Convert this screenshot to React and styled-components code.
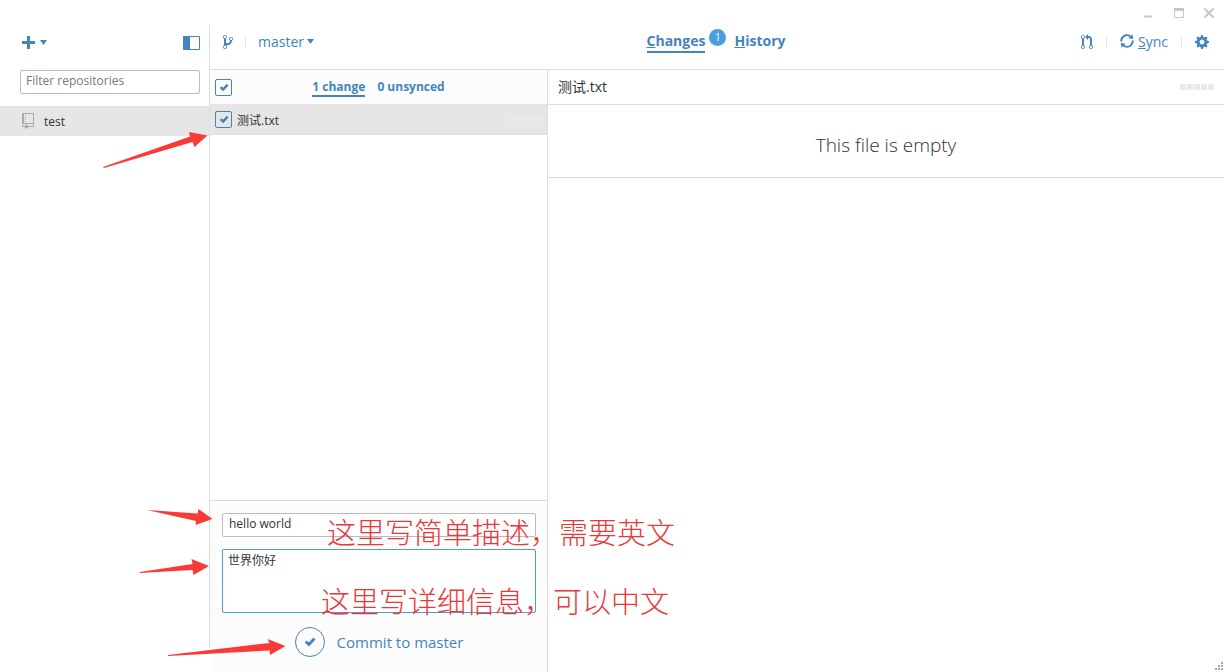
import React, { useState } from 'react';
import styled, { createGlobalStyle } from 'styled-components';

const blue = '#4384bf';
const line = '#dddddd';
const red = '#f93a37';

const GlobalStyle = createGlobalStyle`
  * {
    box-sizing: border-box;
  }
  body {
    margin: 0;
    background: #fff;
    color: #333;
    font-family: 'Open Sans', 'Noto Sans CJK SC', sans-serif;
    font-size: 12px;
  }
  button, input, textarea {
    font-family: inherit;
    color: inherit;
  }
`;

// octicons
const ICONS = {
  branch: {
    w: 10,
    d: 'M10 5c0-1.11-.89-2-2-2a1.993 1.993 0 0 0-1 3.72v.3c-.02.52-.23.98-.63 1.38-.4.4-.86.61-1.38.63-.83.02-1.48.16-2 .45V4.72a1.993 1.993 0 0 0-1-3.72C.88 1 0 1.89 0 3a2 2 0 0 0 1 1.72v6.56c-.59.35-1 .99-1 1.72 0 1.11.89 2 2 2 1.11 0 2-.89 2-2 0-.53-.2-1-.53-1.36.09-.06.48-.41.59-.47.25-.11.56-.17.94-.17 1.05-.05 1.95-.45 2.75-1.25S8.95 7.77 9 6.73h-.02C9.59 6.37 10 5.73 10 5zM2 1.8c.66 0 1.2.55 1.2 1.2 0 .65-.55 1.2-1.2 1.2C1.35 4.2.8 3.65.8 3c0-.65.55-1.2 1.2-1.2zm0 12.41c-.66 0-1.2-.55-1.2-1.2 0-.65.55-1.2 1.2-1.2.65 0 1.2.55 1.2 1.2 0 .65-.55 1.2-1.2 1.2zm6-8c-.66 0-1.2-.55-1.2-1.2 0-.65.55-1.2 1.2-1.2.65 0 1.2.55 1.2 1.2 0 .65-.55 1.2-1.2 1.2z',
  },
  pullRequest: {
    w: 12,
    d: 'M11 11.28V5c-.03-.78-.34-1.47-.94-2.06C9.46 2.35 8.78 2.03 8 2H7V0L4 3l3 3V4h1c.27.02.48.11.69.31.21.2.3.42.31.69v6.28A1.993 1.993 0 0 0 10 15a1.993 1.993 0 0 0 1-3.72zm-1 2.92c-.66 0-1.2-.55-1.2-1.2 0-.65.55-1.2 1.2-1.2.65 0 1.2.55 1.2 1.2 0 .65-.55 1.2-1.2 1.2zM4 3c0-1.11-.89-2-2-2a1.993 1.993 0 0 0-1 3.72v6.56A1.993 1.993 0 0 0 2 15a1.993 1.993 0 0 0 1-3.72V4.72c.59-.34 1-.98 1-1.72zm-.8 10c0 .66-.55 1.2-1.2 1.2-.65 0-1.2-.55-1.2-1.2 0-.65.55-1.2 1.2-1.2.65 0 1.2.55 1.2 1.2zM2 4.2C1.34 4.2.8 3.65.8 3c0-.65.55-1.2 1.2-1.2.65 0 1.2.55 1.2 1.2 0 .65-.55 1.2-1.2 1.2z',
  },
  sync: {
    w: 12,
    d: 'M10.24 7.4a4.15 4.15 0 0 1-1.2 3.6 4.346 4.346 0 0 1-5.41.54L4.8 10.4.5 9.8l.6 4.2 1.31-1.26c2.36 1.74 5.7 1.57 7.84-.54a5.876 5.876 0 0 0 1.74-4.46l-1.75-.34zM2.96 5a4.346 4.346 0 0 1 5.41-.54L7.2 5.6l4.3.6-.6-4.2-1.31 1.26c-2.36-1.74-5.7-1.57-7.85.54C.5 5.03-.06 6.65.01 8.26l1.75.35A4.17 4.17 0 0 1 2.96 5z',
  },
  gear: {
    w: 14,
    d: 'M14 8.77v-1.6l-1.94-.64-.45-1.09.88-1.84-1.13-1.13-1.81.91-1.09-.45-.69-1.92h-1.6l-.63 1.94-1.11.45-1.84-.88-1.13 1.13.91 1.81-.45 1.09L0 7.23v1.59l1.94.64.45 1.09-.88 1.84 1.13 1.13 1.81-.91 1.09.45.69 1.92h1.59l.63-1.94 1.11-.45 1.84.88 1.13-1.13-.92-1.81.47-1.09L14 8.75v.02zM7 10.400c-1.330 0-2.400-1.070-2.400-2.400s1.070-2.400 2.400-2.400 2.400 1.070 2.400 2.400-1.070 2.400-2.400 2.400z',
  },
  repo: {
    w: 12,
    d: 'M4 9H3V8h1v1zm0-3H3v1h1V6zm0-2H3v1h1V4zm0-2H3v1h1V2zm8-1v12c0 .55-.45 1-1 1H6v2l-1.5-1.5L3 16v-2H1c-.55 0-1-.45-1-1V1c0-.55.45-1 1-1h10c.55 0 1 .45 1 1zm-1 10H1v2h2v-1h3v1h5v-2zm0-10H2v9h9V1z',
  },
  check: { w: 12, d: 'M11.500 5.500L5 12.500 .7 8.500 2.700 6.500 4.800 8.400 9.500 3.500z' },
};

function Octicon({ name, height = 16 }) {
  const { w, d } = ICONS[name];
  return (
    <svg
      width={Math.round((w * height) / 16)}
      height={height}
      viewBox={`0 0 ${w} 16`}
      fill="currentColor"
      aria-hidden="true"
    >
      <path d={d} />
    </svg>
  );
}

function Caret() {
  return (
    <svg width="7" height="5" viewBox="0 0 7 5" fill="currentColor" aria-hidden="true">
      <path d="M0 0h7L3.5 5z" />
    </svg>
  );
}

function CheckBox({ label, ...rest }) {
  return (
    <CheckLabel>
      <CheckInput type="checkbox" aria-label={label} {...rest} />
      <Octicon name="check" height={13} />
    </CheckLabel>
  );
}

function App() {
  const [filter, setFilter] = useState('');
  const [checked, setChecked] = useState(true);
  const [summary, setSummary] = useState('hello world');
  const [description, setDescription] = useState('世界你好');

  return (
    <>
      <GlobalStyle />
      <Window>
        <TitleBar>
          <WindowButton aria-label="Minimize">
            <svg width="10" height="10" viewBox="0 0 10 10">
              <path d="M0 8.500h8" stroke="currentColor" strokeWidth="2" />
            </svg>
          </WindowButton>
          <WindowButton aria-label="Maximize">
            <svg width="10" height="10" viewBox="0 0 10 10">
              <path d="M.5 .5h9v9h-9z" fill="none" stroke="currentColor" />
              <path d="M0 0h10v3H0z" fill="currentColor" />
            </svg>
          </WindowButton>
          <WindowButton aria-label="Close">
            <svg width="10" height="10" viewBox="0 0 10 10">
              <path d="M.5 .5l9 9M9.500 .5L.5 9.500" stroke="currentColor" strokeWidth="2" />
            </svg>
          </WindowButton>
        </TitleBar>

        <Columns>
          <Sidebar>
            <SidebarTop>
              <IconButton aria-label="Add repository">
                <svg width="13" height="13" viewBox="0 0 13 13" aria-hidden="true">
                  <path d="M6.500 0v13M0 6.500h13" stroke="currentColor" strokeWidth="3" />
                </svg>
                <Caret />
              </IconButton>
              <IconButton aria-label="Toggle sidebar">
                <svg width="17" height="14" viewBox="0 0 17 14" aria-hidden="true">
                  <path d="M.5 .5h16v13h-16z" fill="none" stroke="currentColor" />
                  <path d="M0 0h7v14H0z" fill="currentColor" />
                </svg>
              </IconButton>
            </SidebarTop>
            <FilterInput
              type="text"
              aria-label="Filter repositories"
              placeholder="Filter repositories"
              value={filter}
              onChange={(e) => setFilter(e.target.value)}
            />
            <RepoRow href="#test">
              <Octicon name="repo" />
              test
            </RepoRow>
            <SidebarArrow width="110" height="40" viewBox="100 130 110 40" aria-hidden="true">
              <path d="M103 167L190 136.500 189 132 207.500 135.500 194.500 147 192.500 142 104 168z" />
            </SidebarArrow>
          </Sidebar>

          <Content>
            <Header>
              <HeaderGroup>
                <Octicon name="branch" />
                <Divider />
                <TextButton $gap={3}>
                  master
                  <Caret />
                </TextButton>
              </HeaderGroup>
              <Tabs>
                <Tab href="#changes" $active>
                  <u>C</u>hanges
                </Tab>
                <Badge>1</Badge>
                <Tab href="#history">
                  <u>H</u>istory
                </Tab>
              </Tabs>
              <HeaderGroup $end>
                <IconButton aria-label="Pull request">
                  <Octicon name="pullRequest" />
                </IconButton>
                <Divider />
                <TextButton $gap={4}>
                  <Octicon name="sync" height={18} />
                  <span>
                    <u>S</u>ync
                  </span>
                </TextButton>
                <Divider />
                <IconButton aria-label="Settings">
                  <Octicon name="gear" />
                </IconButton>
              </HeaderGroup>
            </Header>

            <Panels>
              <ChangesPanel>
                <ChangesBar>
                  <CheckBox
                    label="Select all changes"
                    checked={checked}
                    onChange={(e) => setChecked(e.target.checked)}
                  />
                  <SubTabs>
                    <SubTab href="#change" $active>
                      1 change
                    </SubTab>
                    <SubTab href="#unsynced">0 unsynced</SubTab>
                  </SubTabs>
                </ChangesBar>
                <FileRow>
                  <CheckBox
                    label="测试.txt"
                    checked={checked}
                    onChange={(e) => setChecked(e.target.checked)}
                  />
                  <FileName>测试.txt</FileName>
                  <DiffDots $color="#e9e9e9">
                    <i /><i /><i /><i /><i />
                  </DiffDots>
                </FileRow>
                <CommitForm onSubmit={(e) => e.preventDefault()}>
                  <SummaryInput
                    type="text"
                    aria-label="Summary"
                    value={summary}
                    onChange={(e) => setSummary(e.target.value)}
                  />
                  <DescriptionInput
                    aria-label="Description"
                    value={description}
                    onChange={(e) => setDescription(e.target.value)}
                  />
                  <CommitButton type="submit">
                    <CommitCircle>
                      <Octicon name="check" />
                    </CommitCircle>
                    Commit to master
                  </CommitButton>
                  <Note $top={9} $left={117}>
                    这里写简单描述，需要英文
                  </Note>
                  <Note $top={78} $left={111}>
                    这里写详细信息，可以中文
                  </Note>
                  <FormArrows width="160" height="160" viewBox="140 501 160 160" aria-hidden="true">
                    <path d="M147 510L197.500 513.500 198.500 509 212.500 519 195.500 525 196 521z" />
                    <path d="M140 572L192.500 564 191.500 559 209 566 193.500 575 192.500 570 140 573z" />
                    <path d="M168 655L269.500 643 267.500 639 285.500 646 270 655 269.500 650.500 168 656z" />
                  </FormArrows>
                </CommitForm>
              </ChangesPanel>

              <DiffPanel>
                <DiffHeader>
                  测试.txt
                  <DiffDots $color="#e9e9e9">
                    <i /><i /><i /><i /><i />
                  </DiffDots>
                </DiffHeader>
                <EmptyMessage>This file is empty</EmptyMessage>
              </DiffPanel>
            </Panels>
          </Content>
        </Columns>

        <ResizeGrip width="10" height="10" viewBox="0 0 10 10" aria-hidden="true">
          <path d="M7 0h2v2H7zM4 3h2v2H4zM7 3h2v2H7zM1 6h2v2H1zM4 6h2v2H4zM7 6h2v2H7z" />
        </ResizeGrip>
      </Window>
    </>
  );
}

export default App;

const Window = styled.div`
  position: relative;
  display: flex;
  flex-direction: column;
  min-height: 100vh;
  overflow: hidden;
`;

const TitleBar = styled.div`
  display: flex;
  justify-content: flex-end;
  gap: 20px;
  height: 25px;
  padding: 8px 10px 0 0;
`;

const PlainButton = styled.button`
  display: flex;
  align-items: center;
  padding: 0;
  border: 0;
  background: none;
  cursor: pointer;
`;

const WindowButton = styled(PlainButton)`
  height: 10px;
  color: #c6c6c6;
`;

const Columns = styled.div`
  flex: 1;
  display: flex;
`;

const Sidebar = styled.aside`
  position: relative;
  display: flex;
  flex-direction: column;
  width: 210px;
  flex-shrink: 0;
  margin-bottom: 24px;
  border-right: 1px solid ${line};
`;

const SidebarTop = styled.div`
  display: flex;
  align-items: center;
  justify-content: space-between;
  height: 35px;
  padding: 0 9px 0 22px;
`;

const IconButton = styled(PlainButton)`
  gap: 5px;
  color: ${blue};
`;

const TextBox = styled.input`
  height: 24px;
  padding: 0 6px 3px;
  border: 1px solid #bbb;
  border-radius: 2px;
  background: #fff;
  font-size: 12px;
  outline: none;
`;

const FilterInput = styled(TextBox)`
  margin: 10px 9px 12px 20px;
  padding-left: 5px;

  &::placeholder {
    color: #777;
    opacity: 1;
  }
`;

const RepoRow = styled.a`
  display: flex;
  align-items: center;
  gap: 10px;
  height: 30px;
  padding-left: 22px;
  background: #e6e6e6;
  color: #333;
  font-size: 12px;
  text-decoration: none;

  svg {
    color: #aaa;
  }
`;

const SidebarArrow = styled.svg`
  position: absolute;
  top: 105px;
  left: 100px;
  fill: ${red};
`;

const Content = styled.main`
  flex: 1;
  display: flex;
  flex-direction: column;
  min-width: 0;
`;

const Header = styled.header`
  display: grid;
  grid-template-columns: 1fr auto 1fr;
  height: 45px;
  padding: 0 15px 0 13px;
  border-bottom: 1px solid ${line};
`;

const HeaderGroup = styled.div`
  display: flex;
  align-items: center;
  justify-content: ${(p) => (p.$end ? 'flex-end' : 'flex-start')};
  gap: ${(p) => (p.$end ? '13px' : '12px')};
  height: 34px;
  color: ${blue};
`;

const Divider = styled.span`
  width: 1px;
  height: 12px;
  background: #e4e4e4;
`;

const TextButton = styled(PlainButton)`
  gap: ${(p) => p.$gap}px;
  padding-bottom: 2px;
  color: ${blue};
  font-size: 14px;
`;

const Tabs = styled.nav`
  display: flex;
  align-items: flex-start;
  padding-top: 6px;
`;

const Tab = styled.a`
  height: 22px;
  border-bottom: 2px solid ${(p) => (p.$active ? blue : 'transparent')};
  color: ${blue};
  font-size: 14px;
  font-weight: 700;
  line-height: 20px;
  text-decoration: none;
`;

const Badge = styled.span`
  width: 17px;
  height: 17px;
  margin: -2px 8px 0 4px;
  border-radius: 50%;
  background: #4a9ee2;
  color: #fff;
  font-size: 10px;
  line-height: 17px;
  text-align: center;
`;

const Panels = styled.div`
  flex: 1;
  display: flex;
`;

const ChangesPanel = styled.section`
  display: flex;
  flex-direction: column;
  width: 338px;
  flex-shrink: 0;
  border-right: 1px solid ${line};
`;

const ChangesBar = styled.div`
  display: grid;
  grid-template-columns: 17px 1fr 17px;
  align-items: center;
  height: 34px;
  padding: 0 5px;
  background: #fcfcfc;
`;

const SubTabs = styled.nav`
  display: flex;
  justify-content: center;
  gap: 12px;
`;

const SubTab = styled.a`
  height: 20px;
  border-bottom: 2px solid ${(p) => (p.$active ? blue : 'transparent')};
  color: ${blue};
  font-size: 12px;
  font-weight: 700;
  line-height: 20px;
  text-decoration: none;
`;

const CheckLabel = styled.label`
  display: grid;
  place-items: center;
  width: 17px;
  height: 17px;
  color: ${blue};

  > * {
    grid-area: 1 / 1;
  }
  svg {
    pointer-events: none;
  }
  input:not(:checked) + svg {
    visibility: hidden;
  }
`;

const CheckInput = styled.input`
  appearance: none;
  width: 17px;
  height: 17px;
  margin: 0;
  border: 1px solid ${blue};
  border-radius: 2px;
`;

const FileRow = styled.div`
  display: flex;
  align-items: center;
  gap: 5px;
  height: 31px;
  padding: 0 4px 0 5px;
  border-bottom: 1px solid ${line};
  background: #e6e6e6;
`;

const FileName = styled.span`
  flex: 1;
  padding-top: 2px;
  font-size: 12px;
`;

const DiffDots = styled.span`
  display: flex;
  gap: 1px;

  i {
    width: 6px;
    height: 6px;
    background: ${(p) => p.$color};
  }
`;

const CommitForm = styled.form`
  position: relative;
  display: flex;
  flex-direction: column;
  gap: 12px;
  margin-top: auto;
  height: 172px;
  padding: 12px 11px 0 12px;
  border-top: 1px solid ${line};
  background: #fcfcfc;
`;

const SummaryInput = styled(TextBox)``;

const DescriptionInput = styled.textarea`
  height: 64px;
  padding: 2px 5px;
  border: 1px solid #4a9ed0;
  border-radius: 2px;
  background: #fff;
  font-size: 12px;
  line-height: 18px;
  resize: none;
  outline: none;
`;

const CommitButton = styled(PlainButton)`
  align-self: center;
  gap: 12px;
  padding-top: 2px;
  color: ${blue};
  font-size: 15px;
  line-height: 18px;
`;

const CommitCircle = styled.span`
  display: grid;
  place-items: center;
  width: 30px;
  height: 30px;
  border: 1px solid ${blue};
  border-radius: 50%;
`;

// hand-written remarks that lie over the form
const Note = styled.span`
  position: absolute;
  top: ${(p) => p.$top}px;
  left: ${(p) => p.$left}px;
  color: #e8383a;
  font-family: 'Noto Sans CJK SC', sans-serif;
  font-size: 29px;
  font-weight: 300;
  line-height: 42px;
  white-space: nowrap;
  pointer-events: none;
`;

const FormArrows = styled.svg`
  position: absolute;
  top: 0;
  left: -70px;
  fill: ${red};
  pointer-events: none;
`;

const DiffPanel = styled.section`
  flex: 1;
  min-width: 0;
`;

const DiffHeader = styled.div`
  display: flex;
  align-items: center;
  justify-content: space-between;
  height: 35px;
  padding: 0 10px 1px;
  border-bottom: 1px solid ${line};
  font-size: 14px;
  line-height: 20px;
`;

const EmptyMessage = styled.p`
  margin: 0;
  padding: 25px 0 17px;
  border-bottom: 1px solid ${line};
  font-size: 19px;
  font-weight: 300;
  line-height: 30px;
  text-align: center;
`;

const ResizeGrip = styled.svg`
  position: absolute;
  right: 0;
  bottom: 0;
  fill: #aaa;
`;
